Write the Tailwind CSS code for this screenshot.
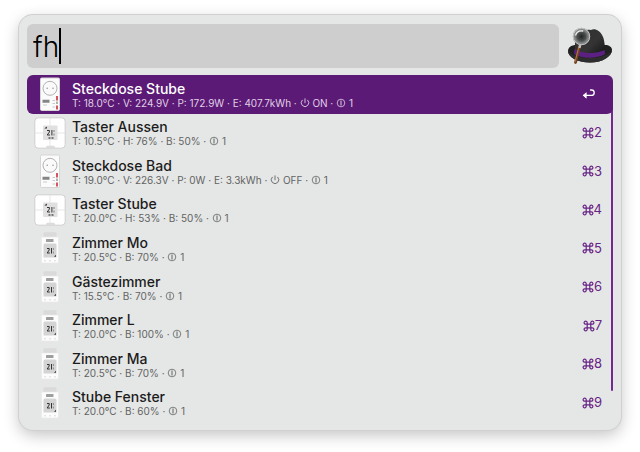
<!DOCTYPE html>
<html lang="de">
<head>
<meta charset="utf-8">
<title>Launcher</title>
<script src="https://cdn.jsdelivr.net/npm/@tailwindcss/browser@4"></script>
</head>
<body class="min-h-screen bg-white px-[19px] pb-5 pt-[15px] font-['Inter','DejaVu_Sans',sans-serif]">
<svg class="hidden" aria-hidden="true">
  <symbol id="plug" viewBox="0 0 32 34">
    <rect x="6.5" y="1" width="19" height="32.500" rx="1.200" fill="#fbfbfb" stroke="#d5d5d5"/>
    <circle cx="16" cy="11.300" r="7" fill="#fafafa" stroke="#a9a9a9" stroke-width=".9"/>
    <circle cx="13.200" cy="11.300" r=".8" fill="#999"/><circle cx="19" cy="11.300" r=".8" fill="#999"/>
    <path d="M8.500 23.500h7M8.500 25h7" stroke="#858585" stroke-width="1.500"/>
    <path d="M9 28h4" stroke="#ccc"/>
    <path d="M18.500 23.500h2.500M18.500 26.500h2.500M18.500 30h2.500" stroke="#bbb" stroke-width=".8"/>
    <path d="M23 19v4.500M23 28.500v4" stroke="#d0444f" stroke-width="1.800"/>
    <path d="M23 24.500v2.500" stroke="#999" stroke-width="1.500"/>
  </symbol>
  <symbol id="taster" viewBox="0 0 32 34">
    <rect x=".8" y="1.800" width="30.400" height="30.400" rx="3.500" fill="#fefefe" stroke="#cfcfcf"/>
    <path d="M16 2v30M1 17h30" stroke="#dedede" stroke-width=".7"/>
    <path d="M12 32c0-2 1-2.200 2-2.200h5c1 0 2 .2 2 2.200z" fill="#dcdcdc"/>
    <rect x="9" y="9.500" width="14.500" height="14.500" rx="1" fill="#dfe0df"/>
    <path d="M10.300 12.500l2.500-2v2z" fill="#222"/>
    <path d="M13 14.500h2.400v1.500l-2.200 3h2.800M17.900 14v5.500" fill="none" stroke="#333" stroke-width="1"/>
    <path d="M20 14v2M20 17.500v2" stroke="#777" stroke-width=".9"/>
    <path d="M14.500 22h2M17.500 22h2" stroke="#555" stroke-width="1.400"/>
  </symbol>
  <symbol id="thermostat" viewBox="0 0 32 34">
    <rect x="9.500" y="1.300" width="13" height="6" rx="1" fill="#d9dad9"/>
    <rect x="7.500" y="6" width="17" height="26" rx="1.200" fill="#fcfcfc" stroke="#e8e8e8" stroke-width=".6"/>
    <rect x="12" y="8" width="7.500" height="3" rx=".5" fill="#9d9f9d"/>
    <path d="M9.500 14q0-1.500 1.500-1.500h10q1.500 0 1.500 1.500v12.500h-13z" fill="#d3d4d3"/>
    <path d="M13 17.500h2.200v1.500l-2 3h2.600M17.500 17v5.500" fill="none" stroke="#333" stroke-width="1"/>
    <path d="M19.400 17v2M19.400 20.500v2" stroke="#777" stroke-width=".8"/>
    <path d="M22 23.700v2h-2z" fill="#333"/>
    <path d="M10.500 29.800h1M15.500 29.800h1M20.500 29.800h1" stroke="#bbb"/>
  </symbol>
  <symbol id="power" viewBox="0 0 10 10">
    <path d="M2.200 2.200a3.800 3.800 0 1 0 5.600 0M5 .8v4" fill="none" stroke="currentColor" stroke-width=".9" stroke-linecap="round"/>
  </symbol>
  <symbol id="status" viewBox="0 0 10 10">
    <circle cx="5" cy="5" r="3.800" fill="none" stroke="currentColor" stroke-width=".8"/>
    <path d="M5 2.500v5" stroke="currentColor" stroke-width="1"/>
  </symbol>
  <symbol id="command" viewBox="0 0 12 12">
    <path d="M4.200 4.200h3.600v3.600H4.200zM4.200 4.200H2.700a1.550 1.550 0 1 1 1.500-1.500zM7.800 4.200V2.700a1.550 1.550 0 1 1 1.500 1.500zM7.800 7.800h1.500a1.550 1.550 0 1 1-1.500 1.500zM4.200 7.800v1.500a1.550 1.550 0 1 1-1.500-1.500z" fill="none" stroke="currentColor" stroke-width="1.200"/>
  </symbol>
</svg>

<main class="rounded-[14px] bg-[#e5e7e6] px-2 pb-2 pt-[9px] shadow-[0_0_0_1px_#cfd0cf,0_5px_16px_rgba(0,0,0,0.24)]">
  <div class="flex items-center">
    <label class="relative block min-w-0 flex-1">
      <span class="sr-only">Suche</span>
      <input type="text" value="fh" class="block h-11 w-full rounded-md bg-[#cecece] px-1.5 pt-0.5 text-[28px] font-light text-black outline-none">
      <span class="absolute left-8 top-1 h-9 w-0.5 bg-black"></span>
    </label>
    <svg class="ml-2 h-11 w-[46px] shrink-0" viewBox="0 0 46 44" role="img" aria-label="Alfred">
      <defs>
        <linearGradient id="felt" x1="0" y1="0" x2="1" y2="1"><stop offset="0" stop-color="#303030"/><stop offset=".55" stop-color="#343434"/><stop offset="1" stop-color="#101010"/></linearGradient>
        <radialGradient id="lens"><stop offset="0" stop-color="#242424"/><stop offset=".55" stop-color="#4d5050"/><stop offset="1" stop-color="#a1a5a4"/></radialGradient>
      </defs>
      <path d="M1 27c0-4 4-6 8-6h29c4 0 7 2 7 5 0 6-9 12.500-22 12.500S1 33 1 27z" fill="#202020"/>
      <path d="M1 27c3 4 10 7 22 7s20-4 22-8c0 6-9 12.500-22 12.500S1 33 1 27z" fill="#2d2d2d"/>
      <path d="M8 29V14C10 8 17 5 24 6c4-2 9 1 11 5 2 3 3 9 3 17-7 7-23 7-30 1z" fill="url(#felt)"/>
      <path d="M7.500 25c8 5 22 5 30 1l.7 4c-8 5-24 5-31 0z" fill="#5c2083"/>
      <path d="M13 20L8.500 38.500" stroke="#70411f" stroke-width="2.800" stroke-linecap="round"/>
      <path d="M12.300 21L8 38" stroke="#c38350" stroke-width=".8"/>
      <path d="M14 18l-1.500 6" stroke="#c0c0c0" stroke-width="2.200"/>
      <circle cx="14.500" cy="12.500" r="8" fill="url(#lens)" stroke="#7d8080" stroke-width="1.500"/>
      <circle cx="14.500" cy="12.500" r="8.200" fill="none" stroke="#dededc" stroke-width=".7"/>
      <path d="M8.700 11c1-3 4-4.500 7-4" fill="none" stroke="#eee" stroke-width="1.300" stroke-linecap="round"/>
    </svg>
  </div>

  <div class="relative mt-[7px]">
    <div class="absolute right-0 top-3 h-[304px] w-0.5 rounded-full bg-[#702a91]"></div>
    <ul id="results" class="relative grid h-[347px] auto-rows-fr"></ul>
  </div>
</main>

<script>
  const items = [
    ['plug', 'Steckdose Stube', 'T: 18.0°C · V: 224.9V · P: 172.9W · E: 407.7kWh', 'ON'],
    ['taster', 'Taster Aussen', 'T: 10.5°C · H: 76% · B: 50%'],
    ['plug', 'Steckdose Bad', 'T: 19.0°C · V: 226.3V · P: 0W · E: 3.3kWh', 'OFF'],
    ['taster', 'Taster Stube', 'T: 20.0°C · H: 53% · B: 50%'],
    ['thermostat', 'Zimmer Mo', 'T: 20.5°C · B: 70%'],
    ['thermostat', 'Gästezimmer', 'T: 15.5°C · B: 70%'],
    ['thermostat', 'Zimmer L', 'T: 20.0°C · B: 100%'],
    ['thermostat', 'Zimmer Ma', 'T: 20.5°C · B: 70%'],
    ['thermostat', 'Stube Fenster', 'T: 20.0°C · B: 60%']
  ];
  const glyph = id => `<svg class="inline-block size-[10px] align-[-1px]"><use href="#${id}"/></svg>`;
  document.getElementById('results').innerHTML = items.map(([icon, title, info, power], i) => {
    const row = i ? 'text-[#1c1c1c]' : 'bg-[#5b1a76] text-white';
    const sub = i ? 'text-[#626363]' : 'text-[#e0d0e6]';
    const key = i
      ? `<span class="flex items-center text-[13px] text-[#672386]"><svg class="size-3" role="img" aria-label="Befehlstaste"><use href="#command"/></svg>${i + 1}</span>`
      : `<svg class="mr-[7px] h-3 w-[13px]" viewBox="0 0 13 12" fill="none" stroke="currentColor" stroke-width="1.300" stroke-linecap="round" stroke-linejoin="round" role="img" aria-label="Eingabetaste"><path d="M8.500 2h1a2.700 2.700 0 0 1 0 5.400H1.500"/><path d="M4 5L1.200 7.400 4 9.900z" fill="currentColor" stroke-width=".8"/></svg>`;
    return `<li class="min-h-0"><button type="button" class="flex h-full w-full items-center rounded-md pl-[7px] pr-[11px] text-left ${row}">
      <svg class="h-[34px] w-8 shrink-0" aria-hidden="true"><use href="#${icon}"/></svg>
      <span class="ml-1.5 min-w-0 flex-1 whitespace-nowrap">
        <span class="block text-[14px] font-medium leading-[17px]">${title}</span>
        <span class="block text-[10px] leading-3 ${sub}">${info} · ${power ? glyph('power') + ' ' + power + ' · ' : ''}${glyph('status')} 1</span>
      </span>${key}</button></li>`;
  }).join('');
</script>
</body>
</html>
